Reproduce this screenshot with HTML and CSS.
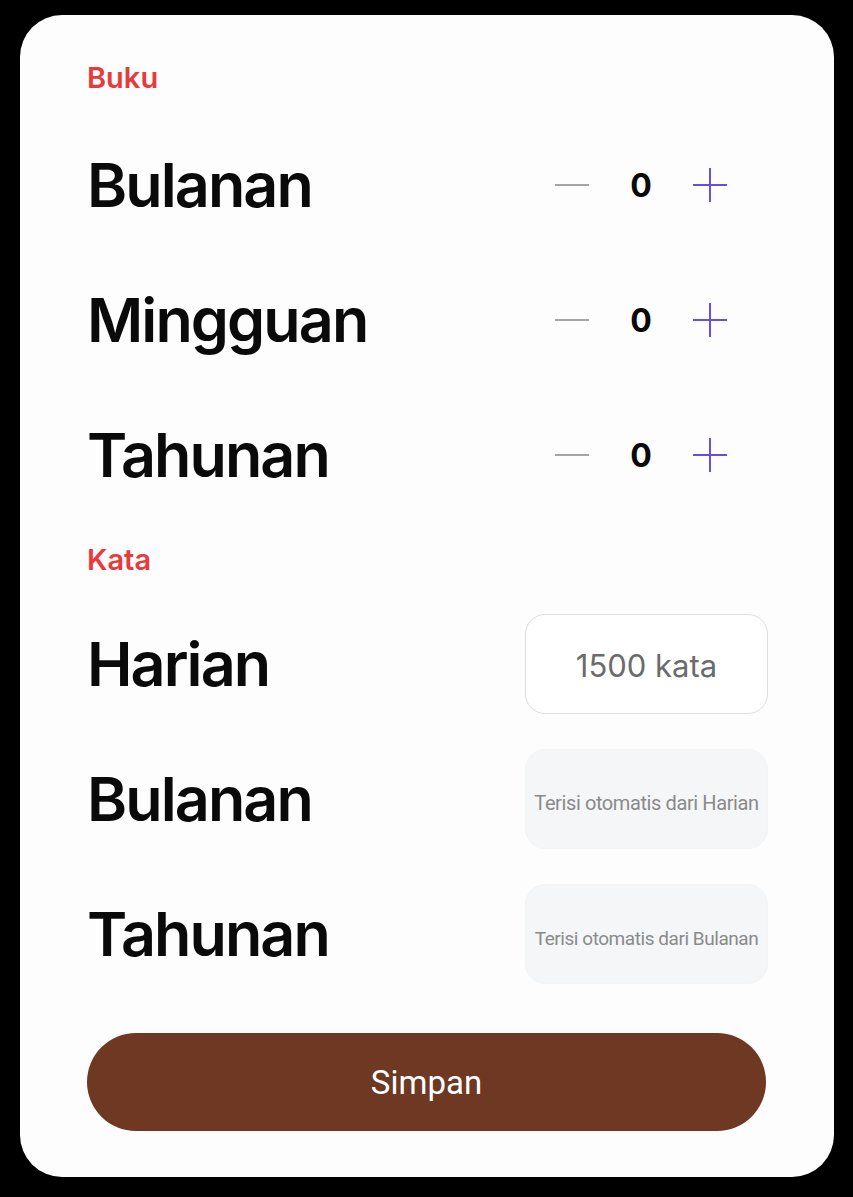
FILE: index.html
```html
<!DOCTYPE html>
<html lang="id">
<head>
    <meta charset="UTF-8">
    <meta name="viewport" content="width=device-width, initial-scale=1.0">
    <title>Target Baca</title>
    <link rel="stylesheet" href="styles.css">
</head>
<body>

    <div class="card">

        <!-- Buku -->
        <div class="section-title">Buku</div>
        <div class="rows">
            <div class="row">
                <div class="row-label">Bulanan</div>
                <div class="stepper">
                    <span class="minus"></span>
                    <span class="count">0</span>
                    <span class="plus"></span>
                </div>
            </div>
            <div class="row">
                <div class="row-label">Mingguan</div>
                <div class="stepper">
                    <span class="minus"></span>
                    <span class="count">0</span>
                    <span class="plus"></span>
                </div>
            </div>
            <div class="row">
                <div class="row-label">Tahunan</div>
                <div class="stepper">
                    <span class="minus"></span>
                    <span class="count">0</span>
                    <span class="plus"></span>
                </div>
            </div>
        </div>

        <!-- Kata -->
        <div class="section-title kata">Kata</div>
        <div class="rows">
            <div class="row">
                <div class="row-label">Harian</div>
                <div class="field">1500 kata</div>
            </div>
            <div class="row">
                <div class="row-label">Bulanan</div>
                <div class="field auto">Terisi otomatis dari Harian</div>
            </div>
            <div class="row">
                <div class="row-label">Tahunan</div>
                <div class="field auto tight">Terisi otomatis dari Bulanan</div>
            </div>
        </div>

        <button type="button" class="save-btn">Simpan</button>
    </div>

</body>
</html>
```

FILE: styles.css
```css
body {
    margin: 0;
    padding: 0;
    background: #000;
    font-family: Inter, "Noto Sans", sans-serif;
}

/* Card */
.card {
    box-sizing: border-box;
    width: 814px;
    height: 1162px;
    margin: 15px 0 0 20px;
    padding: 45px 66px 0 67px;
    background: #fdfdfd;
    border-radius: 42px;
    display: flex;
    flex-direction: column;
}

/* Section headings */
.section-title {
    height: 36px;
    line-height: 36px;
    font-size: 29px;
    font-weight: 600;
    color: #e83a3a;
    margin-bottom: 39px;
}

.section-title.kata {
    margin-top: 37px;
    margin-bottom: 36px;
}

/* Rows */
.rows {
    display: flex;
    flex-direction: column;
    gap: 35px;
}

.row {
    height: 100px;
    display: flex;
    align-items: center;
    justify-content: space-between;
}

.row-label {
    font-size: 61px;
    font-weight: 600;
    color: #0a0a0a;
    letter-spacing: -1.9px;
}

/* Stepper */
.stepper {
    display: flex;
    align-items: center;
    margin-right: 41px;
}

.minus {
    width: 34px;
    height: 2px;
    background: #a4a4a4;
}

.count {
    width: 104px;
    text-align: center;
    font-size: 32px;
    font-weight: 700;
    color: #0a0a0a;
}

.plus {
    position: relative;
    width: 34px;
    height: 34px;
}

.plus::before,
.plus::after {
    content: "";
    position: absolute;
    background: #6a4de0;
}

.plus::before {
    left: 0;
    right: 0;
    top: 16px;
    height: 2px;
}

.plus::after {
    top: 0;
    bottom: 0;
    left: 16px;
    width: 2px;
}

/* Fields */
.field {
    box-sizing: border-box;
    width: 243px;
    height: 100px;
    padding-top: 3px;
    border: 1px solid #dedede;
    border-radius: 20px;
    background: #fff;
    display: flex;
    align-items: center;
    justify-content: center;
    font-size: 31px;
    color: #6b6b6b;
}

.field.auto {
    padding-top: 8px;
    border-color: #f3f4f6;
    background: #f5f6f8;
    font-family: Roboto, "Liberation Sans", sans-serif;
    font-size: 20px;
    letter-spacing: -0.4px;
    color: #8a8a8a;
}

.field.auto.tight {
    font-size: 19px;
    letter-spacing: -0.45px;
}

/* Button */
.save-btn {
    margin-top: 49px;
    width: 679px;
    height: 98px;
    border: none;
    border-radius: 49px;
    background: #6e3823;
    color: #fff;
    font-family: Roboto, "Liberation Sans", sans-serif;
    font-size: 33px;
    cursor: pointer;
}
```
